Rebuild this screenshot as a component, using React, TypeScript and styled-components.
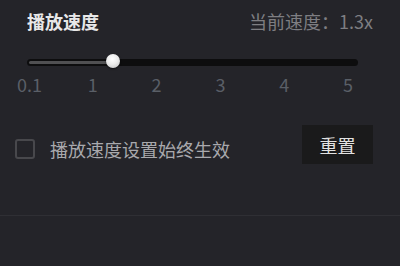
import React from "react";
import styled, { createGlobalStyle } from "styled-components";

const Global = createGlobalStyle`
  html, body { margin: 0; padding: 0; background: #242429; }
  body { width: 400px; height: 266px; overflow: hidden;
    font-family: "Noto Sans CJK SC", "Noto Sans", sans-serif; }
`;

const Page = styled.div`
  width: 400px;
  height: 266px;
  background: #242429;
  display: flex;
  flex-direction: column;
`;

const Panel = styled.div`
  padding: 9px 27px 0 27px;
  display: flex;
  flex-direction: column;
`;

const Header = styled.div`
  display: flex;
  justify-content: space-between;
  align-items: center;
  height: 24px;
`;

const Title = styled.div`
  font-size: 18px;
  font-weight: 700;
  color: #e8e8e8;
  line-height: 24px;
`;

const Current = styled.div`
  font-size: 18px;
  color: #7e7e82;
  line-height: 24px;
`;

const SliderArea = styled.div`
  position: relative;
  margin: 19px 15px 0 0;
  height: 20px;
  display: flex;
  align-items: center;
`;

const Track = styled.div`
  position: relative;
  width: 100%;
  height: 7px;
  border-radius: 4px;
  background: #0d0d0e;
`;

const Fill = styled.div`
  position: absolute;
  left: 2px;
  top: 2px;
  height: 3px;
  border-radius: 2px;
  background: #505052;
`;

const Thumb = styled.div`
  position: absolute;
  top: 50%;
  width: 14px;
  height: 14px;
  margin: -8px 0 0 -7px;
  border-radius: 50%;
  background: radial-gradient(circle at 45% 35%, #ffffff 0%, #ececec 45%, #bdbdbd 100%);
  box-shadow: 0 1px 2px rgba(0, 0, 0, 0.6);
`;

const Labels = styled.div`
  display: flex;
  justify-content: space-between;
  margin: 2px 13px 0 -10px;
  height: 20px;
`;

const Label = styled.span`
  width: 24px;
  text-align: center;
  font-size: 18px;
  line-height: 20px;
  color: #5a5f67;
`;

const OptionRow = styled.div`
  display: flex;
  justify-content: space-between;
  align-items: flex-start;
  margin-top: 31px;
`;

const CheckLabel = styled.label`
  display: flex;
  align-items: center;
  gap: 15px;
  margin: 14px 0 0 -12px;
  height: 20px;
  cursor: pointer;
`;

const Box = styled.span`
  box-sizing: border-box;
  width: 20px;
  height: 20px;
  border: 2px solid #48484c;
  border-radius: 3px;
`;

const CheckText = styled.span`
  font-size: 18px;
  color: #a9a9ad;
  line-height: 20px;
`;

const ResetButton = styled.button`
  width: 71px;
  height: 39px;
  border: none;
  background: #1a1a1b;
  color: #e2e2e2;
  font-family: "Noto Sans CJK SC", "Noto Sans", sans-serif;
  font-size: 18px;
  padding: 0;
  cursor: pointer;
`;

const Divider = styled.div`
  margin-top: 51px;
  height: 1px;
  background: #2f2f34;
`;

const marks = ["0.1", "1", "2", "3", "4", "5"];
const value = 1.3;

// thumb position measured along the label centres
const trackLeft = 27;
const firstCenter = 30;
const step = 63.8;
const thumbX = firstCenter + step * value - trackLeft;

export default function App() {
  return (
    <Page>
      <Global />
      <Panel>
        <Header>
          <Title>播放速度</Title>
          <Current>当前速度：{value}x</Current>
        </Header>
        <SliderArea>
          <Track>
            <Fill style={{ width: thumbX - 2 }} />
            <Thumb style={{ left: thumbX }} />
          </Track>
        </SliderArea>
        <Labels>
          {marks.map((m) => (
            <Label key={m}>{m}</Label>
          ))}
        </Labels>
        <OptionRow>
          <CheckLabel>
            <Box />
            <CheckText>播放速度设置始终生效</CheckText>
          </CheckLabel>
          <ResetButton>重置</ResetButton>
        </OptionRow>
      </Panel>
      <Divider />
    </Page>
  );
}
